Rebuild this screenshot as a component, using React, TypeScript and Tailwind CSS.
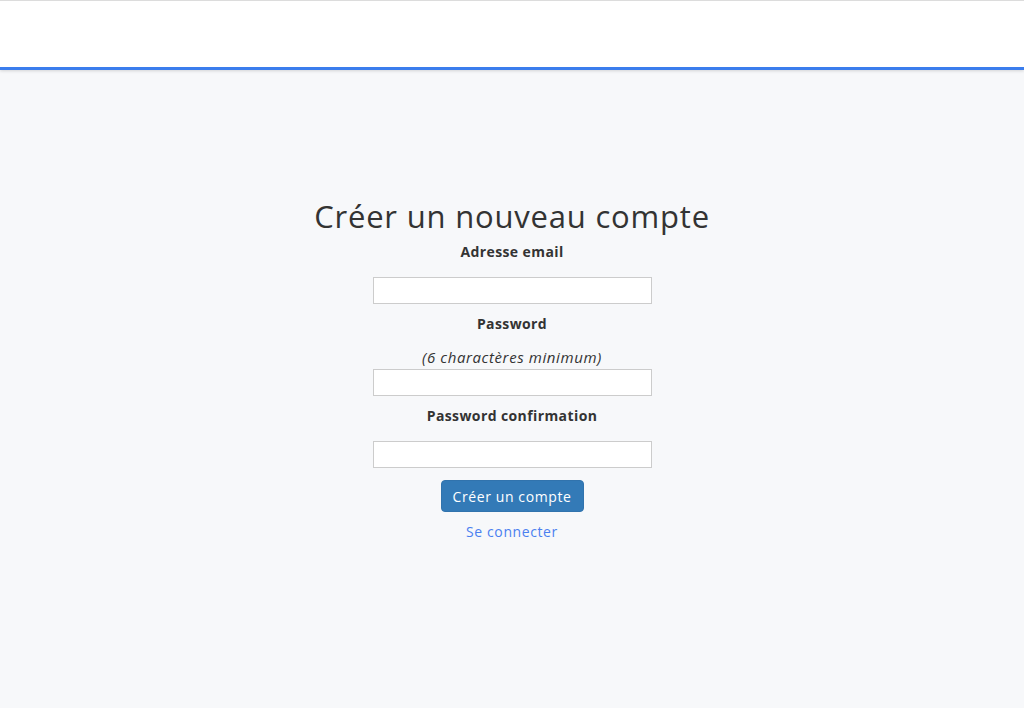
import React from "react";

export default function App() {
  return (
    <div
      className="min-h-[708px] bg-[#f7f8fa] text-[#333333]"
      style={{ fontFamily: '"Open Sans", "Noto Sans", sans-serif' }}
    >
      <div className="h-[70px] bg-white border-t border-[#dcdcdc] border-b-[3px] border-b-[#3b7ded] shadow-[0_1px_3px_rgba(0,0,0,0.15)]" />
      <div className="flex flex-col items-center pt-[126px]">
        <h1 className="text-[31px] leading-[40px] font-normal tracking-[0.8px] text-[#333]">Créer un nouveau compte</h1>
        <label className="mt-[6px] text-[14px] leading-[20px] font-bold tracking-[0.4px]">Adresse email</label>
        <input type="email" className="mt-[15px] w-[279px] h-[27px] bg-white border border-[#cccccc] outline-none" />
        <label className="mt-[10px] text-[14px] leading-[20px] font-bold tracking-[0.4px]">Password</label>
        <p className="mt-[13px] text-[15px] leading-[20px] italic tracking-[0.6px]">(6 charactères minimum)</p>
        <input type="password" className="mt-[2px] w-[279px] h-[27px] bg-white border border-[#cccccc] outline-none" />
        <label className="mt-[10px] text-[14px] leading-[20px] font-bold tracking-[0.4px]">Password confirmation</label>
        <input type="password" className="mt-[15px] w-[279px] h-[27px] bg-white border border-[#cccccc] outline-none" />
        <button className="mt-[12px] w-[143px] h-[32px] rounded-[4px] bg-[#337ab7] border border-[#3173ad] text-white text-[14px] tracking-[0.6px]">
          Créer un compte
        </button>
        <a href="#" className="mt-[10px] text-[14px] leading-[20px] text-[#4a80f0] tracking-[0.6px]">Se connecter</a>
      </div>
    </div>
  );
}
